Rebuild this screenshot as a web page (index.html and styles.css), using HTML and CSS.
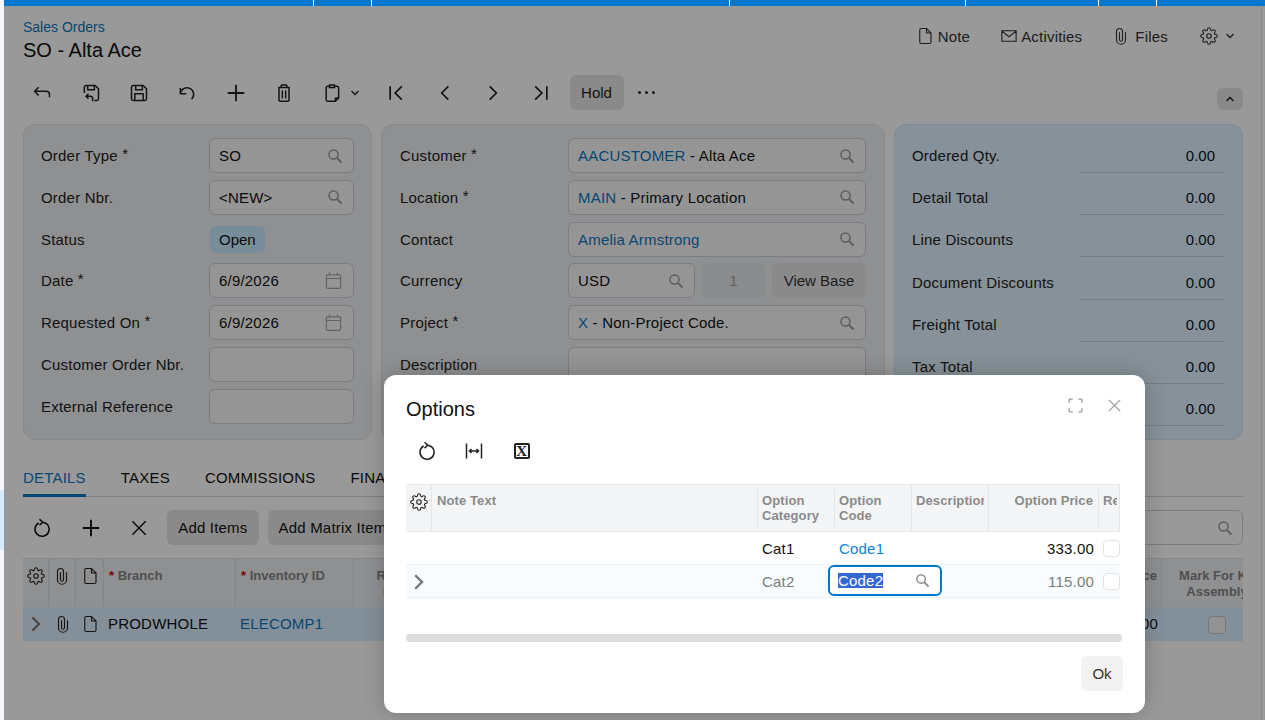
FILE: index.html
```html
<!DOCTYPE html>
<html lang="en">
<head>
<meta charset="UTF-8" />
<meta name="viewport" content="width=device-width, initial-scale=1" />
<title>Sales Orders - SO - Alta Ace</title>
<link rel="stylesheet" href="styles.css">
</head>
<body>

<svg class="icon-defs" aria-hidden="true">
  <symbol id="i-search" viewBox="0 0 16 16"><circle cx="6.5" cy="6.5" r="4.5"/><path d="M10 10l4.5 4.5" stroke-width="2"/></symbol>
  <symbol id="i-calendar" viewBox="0 0 24 24"><path d="M3 6a1 1 0 0 1 1-1h16a1 1 0 0 1 1 1v14a2 2 0 0 1-2 2H5a2 2 0 0 1-2-2z M3 9.5h18 M7 2v3 M17 2v3"/></symbol>
  <symbol id="i-back" viewBox="0 0 24 24"><path d="M8 5l-5 5 5 5 M3 10h14a4 4 0 0 1 4 4v3"/></symbol>
  <symbol id="i-saveback" viewBox="0 0 24 24"><path d="M4 12V5a2 2 0 0 1 2-2h11l4 4v12a2 2 0 0 1-2 2h-3 M8 3v5h8V3 M9 13l-3 3 3 3 M6 16h5a3 3 0 0 1 3 3v3"/></symbol>
  <symbol id="i-save" viewBox="0 0 24 24"><path d="M5 3h12l4 4v12a2 2 0 0 1-2 2H5a2 2 0 0 1-2-2V5a2 2 0 0 1 2-2z M8 3v5h8V3 M7 21v-8h10v8"/></symbol>
  <symbol id="i-undo" viewBox="0 0 24 24"><path d="M4 6v7h7 M4 13a8 8 0 1 1 13.5 6.5"/></symbol>
  <symbol id="i-plus" viewBox="0 0 24 24"><path d="M12 3v18 M3 12h18" stroke-width="2"/></symbol>
  <symbol id="i-trash" viewBox="0 0 24 24"><path d="M8.500 5V3.500a1 1 0 0 1 1-1h5a1 1 0 0 1 1 1V5 M5 5.500h14 M6 5.500v15a1.500 1.500 0 0 0 1.500 1.500h9a1.500 1.500 0 0 0 1.500-1.500v-15 M10 9v9.500 M14 9v9.500"/></symbol>
  <symbol id="i-paste" viewBox="0 0 24 24"><path d="M9 4H7a2 2 0 0 0-2 2v14a2 2 0 0 0 2 2h9l4-4V6a2 2 0 0 0-2-2h-2 M9 2.500h6v3H9z M16 22v-3a1 1 0 0 1 1-1h3"/></symbol>
  <symbol id="i-down" viewBox="0 0 24 24"><path d="M5 8l7 7 7-7" stroke-width="2.600"/></symbol>
  <symbol id="i-up" viewBox="0 0 24 24"><path d="M5 16l7-7 7 7" stroke-width="3"/></symbol>
  <symbol id="i-first" viewBox="0 0 24 24"><path d="M5 4v16 M19 4l-8 8 8 8" stroke-width="2"/></symbol>
  <symbol id="i-prev" viewBox="0 0 24 24"><path d="M16 4l-8 8 8 8" stroke-width="2"/></symbol>
  <symbol id="i-next" viewBox="0 0 24 24"><path d="M8 4l8 8-8 8" stroke-width="2"/></symbol>
  <symbol id="i-chev" viewBox="0 0 24 24"><path d="M7 3l9 9-9 9" stroke-width="3.200"/></symbol>
  <symbol id="i-last" viewBox="0 0 24 24"><path d="M19 4v16 M5 4l8 8-8 8" stroke-width="2"/></symbol>
  <symbol id="i-note" viewBox="0 0 24 24"><path d="M5 4a2 2 0 0 1 2-2h7l6 6v12a2 2 0 0 1-2 2H7a2 2 0 0 1-2-2z M14 2v6h6"/></symbol>
  <symbol id="i-mail" viewBox="0 0 24 24"><path d="M2.500 5h19v14h-19z M2.500 5.500L12 13l9.500-7.500"/></symbol>
  <symbol id="i-clip" viewBox="0 0 24 24"><path d="M10 7v10a2 2 0 0 0 4 0V6a4 4 0 0 0-8 0v11a6 6 0 0 0 12 0V7"/></symbol>
  <symbol id="i-gear" viewBox="0 0 24 24"><circle cx="12" cy="12" r="3"/><path d="M19.400 15a1.650 1.650 0 0 0 .33 1.820l.06.06a2 2 0 0 1 0 2.830 2 2 0 0 1-2.830 0l-.06-.06a1.650 1.650 0 0 0-1.820-.33 1.650 1.650 0 0 0-1 1.510V21a2 2 0 0 1-2 2 2 2 0 0 1-2-2v-.09A1.650 1.650 0 0 0 9 19.400a1.650 1.650 0 0 0-1.820.33l-.06.06a2 2 0 0 1-2.830 0 2 2 0 0 1 0-2.830l.06-.06a1.650 1.650 0 0 0 .33-1.820 1.650 1.650 0 0 0-1.510-1H3a2 2 0 0 1-2-2 2 2 0 0 1 2-2h.09A1.650 1.650 0 0 0 4.600 9a1.650 1.650 0 0 0-.33-1.820l-.06-.06a2 2 0 0 1 0-2.830 2 2 0 0 1 2.830 0l.06.06a1.650 1.650 0 0 0 1.820.33H9a1.650 1.650 0 0 0 1-1.510V3a2 2 0 0 1 2-2 2 2 0 0 1 2 2v.09a1.650 1.650 0 0 0 1 1.510 1.650 1.650 0 0 0 1.820-.33l.06-.06a2 2 0 0 1 2.830 0 2 2 0 0 1 0 2.830l-.06.06a1.650 1.650 0 0 0-.33 1.820V9a1.650 1.650 0 0 0 1.510 1H21a2 2 0 0 1 2 2 2 2 0 0 1-2 2h-.09a1.650 1.650 0 0 0-1.510 1z"/></symbol>
  <symbol id="i-reload" viewBox="0 0 24 24"><path d="M9 1.500l4 3.500-4 3.500 M13 5a8.500 8.500 0 1 1-5 1"/></symbol>
  <symbol id="i-close" viewBox="0 0 24 24"><path d="M4 4l16 16 M20 4L4 20"/></symbol>
  <symbol id="i-expand" viewBox="0 0 24 24"><path d="M3 8V4a1 1 0 0 1 1-1h4 M16 3h4a1 1 0 0 1 1 1v4 M21 16v4a1 1 0 0 1-1 1h-4 M8 21H4a1 1 0 0 1-1-1v-4"/></symbol>
  <symbol id="i-fit" viewBox="0 0 24 24"><path d="M3 3v18 M21 3v18 M6.500 12h11 M9 9.500L6.500 12 9 14.500 M15 9.500l2.500 2.500-2.500 2.500"/></symbol>
</svg>

<div class="app">
  <div class="left-strip"><div class="left-strip-mark"></div></div>

  <div class="app-col">
    <!-- top bar -->
    <div class="topbar">
      <span style="width:310px"></span>
      <span style="width:58px"></span>
      <span style="width:358px"></span>
      <span style="width:236px"></span>
      <span style="width:133px"></span>
      <span style="width:58px"></span>
    </div>

    <div class="page">
      <div class="page-body">

        <!-- title -->
        <div class="page-head">
          <div>
            <div class="crumb">Sales Orders</div>
            <div class="page-title">SO - Alta Ace</div>
          </div>
          <div class="head-links">
            <span class="head-link"><svg class="ico ico-18"><use href="#i-note"/></svg>Note</span>
            <span class="head-link head-link-tight"><svg class="ico ico-18"><use href="#i-mail"/></svg>Activities</span>
            <span class="head-link head-link-files"><svg class="ico ico-18"><use href="#i-clip"/></svg>Files</span>
            <span class="head-link head-link-gear"><svg class="ico ico-18"><use href="#i-gear"/></svg><svg class="ico ico-12"><use href="#i-down"/></svg></span>
          </div>
        </div>

        <!-- main toolbar -->
        <div class="toolbar">
          <button class="tool"><svg class="ico"><use href="#i-back"/></svg></button>
          <button class="tool"><svg class="ico"><use href="#i-saveback"/></svg></button>
          <button class="tool"><svg class="ico"><use href="#i-save"/></svg></button>
          <button class="tool"><svg class="ico"><use href="#i-undo"/></svg></button>
          <button class="tool"><svg class="ico ico-plus"><use href="#i-plus"/></svg></button>
          <button class="tool"><svg class="ico"><use href="#i-trash"/></svg></button>
          <button class="tool tool-menu"><svg class="ico"><use href="#i-paste"/></svg><svg class="ico ico-12"><use href="#i-down"/></svg></button>
          <button class="tool"><svg class="ico"><use href="#i-first"/></svg></button>
          <button class="tool"><svg class="ico"><use href="#i-prev"/></svg></button>
          <button class="tool"><svg class="ico"><use href="#i-next"/></svg></button>
          <button class="tool"><svg class="ico"><use href="#i-last"/></svg></button>
          <button class="btn btn-hold">Hold</button>
          <button class="tool tool-dots"><span></span><span></span><span></span></button>
          <button class="collapse-btn"><svg class="ico ico-12"><use href="#i-up"/></svg></button>
        </div>

        <!-- summary cards -->
        <div class="cards">
          <div class="card">
            <div class="field-row"><div class="field-label">Order Type <span class="req">*</span></div><div class="field"><span class="field-text">SO</span><svg class="ico-search"><use href="#i-search"/></svg></div></div>
            <div class="field-row"><div class="field-label">Order Nbr.</div><div class="field"><span class="field-text">&lt;NEW&gt;</span><svg class="ico-search"><use href="#i-search"/></svg></div></div>
            <div class="field-row"><div class="field-label">Status</div><div><span class="pill">Open</span></div></div>
            <div class="field-row"><div class="field-label">Date <span class="req">*</span></div><div class="field"><span class="field-text">6/9/2026</span><svg class="ico-cal"><use href="#i-calendar"/></svg></div></div>
            <div class="field-row"><div class="field-label">Requested On <span class="req">*</span></div><div class="field"><span class="field-text">6/9/2026</span><svg class="ico-cal"><use href="#i-calendar"/></svg></div></div>
            <div class="field-row"><div class="field-label">Customer Order Nbr.</div><div class="field"></div></div>
            <div class="field-row"><div class="field-label">External Reference</div><div class="field"></div></div>
          </div>

          <div class="card card-wide">
            <div class="field-row"><div class="field-label">Customer <span class="req">*</span></div><div class="field"><span class="field-text"><span class="link">AACUSTOMER</span> - Alta Ace</span><svg class="ico-search"><use href="#i-search"/></svg></div></div>
            <div class="field-row"><div class="field-label">Location <span class="req">*</span></div><div class="field"><span class="field-text"><span class="link">MAIN</span> - Primary Location</span><svg class="ico-search"><use href="#i-search"/></svg></div></div>
            <div class="field-row"><div class="field-label">Contact</div><div class="field"><span class="field-text link">Amelia Armstrong</span><svg class="ico-search"><use href="#i-search"/></svg></div></div>
            <div class="field-row">
              <div class="field-label">Currency</div>
              <div class="field-group">
                <div class="field field-currency"><span class="field-text">USD</span><svg class="ico-search"><use href="#i-search"/></svg></div>
                <div class="field-disabled">1</div>
                <button class="btn btn-base">View Base</button>
              </div>
            </div>
            <div class="field-row"><div class="field-label">Project <span class="req">*</span></div><div class="field"><span class="field-text"><span class="link">X</span> - Non-Project Code.</span><svg class="ico-search"><use href="#i-search"/></svg></div></div>
            <div class="field-row"><div class="field-label">Description</div><div class="field"></div></div>
          </div>

          <div class="card card-totals">
            <div class="field-row"><div class="field-label">Ordered Qty.</div><div class="total-value">0.00</div></div>
            <div class="field-row"><div class="field-label">Detail Total</div><div class="total-value">0.00</div></div>
            <div class="field-row"><div class="field-label">Line Discounts</div><div class="total-value">0.00</div></div>
            <div class="field-row"><div class="field-label">Document Discounts</div><div class="total-value">0.00</div></div>
            <div class="field-row"><div class="field-label">Freight Total</div><div class="total-value">0.00</div></div>
            <div class="field-row"><div class="field-label">Tax Total</div><div class="total-value">0.00</div></div>
            <div class="field-row"><div class="field-label">Order Total</div><div class="total-value">0.00</div></div>
          </div>
        </div>

        <!-- tabs -->
        <div class="tabs">
          <div class="tab tab-active">DETAILS</div>
          <div class="tab">TAXES</div>
          <div class="tab">COMMISSIONS</div>
          <div class="tab">FINANCIAL</div>
        </div>

        <div class="grid-tools">
          <button class="tool"><svg class="ico"><use href="#i-reload"/></svg></button>
          <button class="tool"><svg class="ico ico-plus"><use href="#i-plus"/></svg></button>
          <button class="tool"><svg class="ico"><use href="#i-close"/></svg></button>
          <button class="btn btn-add btn-add-first">Add Items</button>
          <button class="btn btn-add">Add Matrix Items</button>
          <div class="grid-search"><svg class="ico-search"><use href="#i-search"/></svg></div>
        </div>

        <!-- details grid -->
        <div class="details">
          <div class="details-row details-head">
            <div class="dcell dcell-ico"><svg class="ico ico-18"><use href="#i-gear"/></svg></div>
            <div class="dcell dcell-ico"><svg class="ico ico-18"><use href="#i-clip"/></svg></div>
            <div class="dcell dcell-ico"><svg class="ico ico-18"><use href="#i-note"/></svg></div>
            <div class="dcell"><span class="req-red">*</span> Branch</div>
            <div class="dcell"><span class="req-red">*</span> Inventory ID</div>
            <div class="dcell dcell-center">Related<br>Items</div>
            <div class="dcell dcell-right">Unit Price</div>
            <div class="dcell dcell-center">Mark For Kit<br>Assembly</div>
          </div>
          <div class="details-row details-line">
            <div class="dcell dcell-ico dcell-chev"><svg class="ico ico-18"><use href="#i-chev"/></svg></div>
            <div class="dcell dcell-ico"><svg class="ico ico-18"><use href="#i-clip"/></svg></div>
            <div class="dcell dcell-ico"><svg class="ico ico-18"><use href="#i-note"/></svg></div>
            <div class="dcell">PRODWHOLE</div>
            <div class="dcell link">ELECOMP1</div>
            <div class="dcell"></div>
            <div class="dcell dcell-right">0.00</div>
            <div class="dcell dcell-center"><span class="check"></span></div>
          </div>
        </div>

      </div>

      <!-- dialog -->
      <div class="backdrop"></div>
      <div class="modal">
        <div class="modal-head">
          <div class="modal-title">Options</div>
          <div class="modal-actions">
            <svg class="ico-modal"><use href="#i-expand"/></svg>
            <svg class="ico-modal"><use href="#i-close"/></svg>
          </div>
        </div>

        <div class="modal-tools">
          <button class="modal-tool"><svg class="ico"><use href="#i-reload"/></svg></button>
          <button class="modal-tool"><svg class="ico"><use href="#i-fit"/></svg></button>
          <button class="modal-tool"><span class="excel-x">X</span></button>
        </div>

        <div class="opt-grid">
          <div class="opt-row opt-head">
            <div class="ocell ocell-gear"><svg class="ico ico-18"><use href="#i-gear"/></svg></div>
            <div class="ocell ocell-note"><span class="ocell-clip">Note Text</span></div>
            <div class="ocell"><span class="ocell-clip">Option Category</span></div>
            <div class="ocell"><span class="ocell-clip">Option Code</span></div>
            <div class="ocell"><span class="ocell-clip ocell-nowrap">Description</span></div>
            <div class="ocell ocell-right"><span class="ocell-clip">Option Price</span></div>
            <div class="ocell ocell-last"><span class="ocell-clip ocell-nowrap">Required</span></div>
          </div>
          <div class="opt-row opt-line">
            <div class="ocell"></div>
            <div class="ocell"></div>
            <div class="ocell">Cat1</div>
            <div class="ocell opt-link">Code1</div>
            <div class="ocell"></div>
            <div class="ocell ocell-right">333.00</div>
            <div class="ocell ocell-check"><span class="opt-check"></span></div>
          </div>
          <div class="opt-row opt-line opt-line-active">
            <div class="ocell ocell-gear"><svg class="ico ico-18"><use href="#i-chev"/></svg></div>
            <div class="ocell"></div>
            <div class="ocell">Cat2</div>
            <div class="ocell ocell-edit">
              <div class="cell-editor"><span class="cell-selected">Code2</span><svg class="ico-search"><use href="#i-search"/></svg></div>
            </div>
            <div class="ocell"></div>
            <div class="ocell ocell-right">115.00</div>
            <div class="ocell ocell-check"><span class="opt-check"></span></div>
          </div>
        </div>

        <div class="opt-scroll"></div>

        <div class="modal-foot">
          <button class="btn-ok">Ok</button>
        </div>
      </div>
    </div>
  </div>
</div>

</body>
</html>
```

FILE: styles.css
```css
* { box-sizing: border-box; }
html, body {
  margin: 0;
  height: 100%;
  overflow: hidden;
}
body {
  font-family: "Liberation Sans", Arial, sans-serif;
  font-size: 15px;
  color: #111;
  background: #fff;
}
button {
  font: inherit;
  color: inherit;
  border: none;
  background: none;
  padding: 0;
}
.icon-defs {
  position: absolute;
  width: 0;
  height: 0;
}

/* icons */
.ico {
  width: 20px;
  height: 20px;
  fill: none;
  stroke: currentColor;
  stroke-width: 1.8;
  flex: none;
}
.ico-18 { width: 18px; height: 18px; stroke-width: 1.5; }
.ico-12 { width: 12px; height: 12px; }
.ico-plus { width: 22px; height: 22px; }
.ico-search {
  width: 16px;
  height: 16px;
  margin-left: auto;
  fill: none;
  stroke: #9c9c9c;
  stroke-width: 1.5;
  flex: none;
}
.ico-cal {
  width: 19px;
  height: 19px;
  margin-left: auto;
  fill: none;
  stroke: #a6a6a6;
  stroke-width: 1.5;
  flex: none;
}

/* shell */
.app {
  display: flex;
  width: 1265px;
  height: 720px;
}
.left-strip {
  width: 4px;
  flex: none;
  padding-top: 490px;
  background: #f6f8fb;
}
.left-strip-mark {
  height: 60px;
  background: #d6eaf8;
}
.app-col {
  flex: 1;
  display: flex;
  flex-direction: column;
  min-width: 0;
}
.topbar {
  height: 6px;
  flex: none;
  display: flex;
  background: #0078d0;
}
.topbar span {
  height: 6px;
  border-right: 1px solid #fff;
}
.page {
  flex: 1;
  position: relative;
  overflow: hidden;
  background: #fff;
}
.page-body {
  width: 1258px;
  height: 100%;
  padding: 0 18px 0 19px;
  border-right: 1px solid #e2e2e2;
  overflow: hidden;
}
.backdrop {
  position: absolute;
  inset: 0;
  background: rgba(0, 0, 0, 0.4);
}

/* head */
.page-head {
  height: 69px;
  padding-top: 13px;
  display: flex;
  justify-content: space-between;
}
.crumb {
  font-size: 14px;
  line-height: 16px;
  color: #0a78c2;
}
.page-title {
  font-size: 20px;
  line-height: 26px;
  margin-top: 2px;
}
.head-links {
  display: flex;
  align-items: center;
  height: 34px;
  color: #333;
  letter-spacing: 0.2px;
}
.head-link {
  display: flex;
  align-items: center;
  gap: 4px;
  margin-left: 30px;
}
.head-link-tight { gap: 3px; }
.head-link-files { gap: 5px; }
.head-link-gear { gap: 6px; margin-left: 32px; margin-right: 7px; }

/* main toolbar */
.toolbar {
  height: 35px;
  display: flex;
  align-items: center;
  margin-left: -5px;
  position: relative;
  color: #222;
}
.tool {
  width: 48.4px;
  height: 35px;
  display: flex;
  align-items: center;
  justify-content: center;
  flex: none;
}
.tool-menu { width: 63.6px; gap: 7px; justify-content: flex-start; padding-left: 14px; }
.btn {
  height: 35px;
  border-radius: 6px;
  background: #e6e6e6;
  flex: none;
}
.btn-hold { width: 54px; margin-left: 4px; }
.tool-dots { gap: 4px; width: 46px; }
.tool-dots span {
  width: 3px;
  height: 3px;
  border-radius: 50%;
  background: #222;
}
.collapse-btn {
  position: absolute;
  right: 0;
  top: 13px;
  width: 26px;
  height: 22px;
  border-radius: 6px;
  background: #e6e6e6;
  display: flex;
  align-items: center;
  justify-content: center;
}

/* cards */
.cards {
  display: grid;
  grid-template-columns: 349px 504px 349px;
  gap: 9px;
  margin-top: 14px;
}
.card {
  height: 316px;
  padding: 13px 17px;
  border: 1px solid #e3e5e8;
  border-radius: 12px;
  background: #edf0f3;
  display: flex;
  flex-direction: column;
  gap: 6.8px;
}
.card-wide { padding-left: 18px; }
.card-totals {
  background: #dff2ff;
  border-color: #d2e8f8;
  gap: 7.2px;
}
.field-row {
  display: grid;
  grid-template-columns: 168px 145px;
  height: 35px;
  align-items: center;
  flex: none;
}
.card-wide .field-row { grid-template-columns: 168px 298px; }
.card-totals .field-row { grid-template-columns: 168px 144px; }
.field-label {
  color: #222;
  letter-spacing: 0.2px;
}
.req {
  font-size: 15px;
  line-height: 0;
  vertical-align: 2px;
}
.field {
  height: 35px;
  display: flex;
  align-items: center;
  padding: 0 10px 0 9px;
  border: 1px solid #cdd0d5;
  border-radius: 6px;
  background: #f9f9f9;
}
.field-text {
  letter-spacing: 0.2px;
  white-space: nowrap;
}
.link { color: #0a78c2; }
.pill {
  display: inline-block;
  margin-left: 1px;
  padding: 0 9px;
  line-height: 27px;
  border-radius: 6px;
  background: #c6ecff;
}
.field-group {
  display: flex;
  gap: 7px;
}
.field-currency { width: 127px; }
.field-disabled {
  width: 63px;
  height: 35px;
  line-height: 35px;
  text-align: center;
  border-radius: 6px;
  background: #e6e8ea;
  color: #a2a2a2;
}
.btn-base { width: 94px; color: #333; }
.total-value {
  height: 35px;
  line-height: 36px;
  padding-right: 9px;
  text-align: right;
  border-bottom: 1px solid #c6d4dd;
}

/* tabs */
.tabs {
  display: flex;
  gap: 35px;
  height: 38px;
  margin-top: 19px;
  border-bottom: 1px solid #d8d8d8;
  letter-spacing: 0.2px;
}
.tab { line-height: 38px; }
.tab-active {
  color: #0a78c2;
  height: 38px;
  border-bottom: 3px solid #0a78c2;
}

.grid-tools {
  display: flex;
  align-items: center;
  height: 35px;
  margin-top: 13px;
  margin-left: -5px;
}
.btn-add { margin-right: 9px; padding: 0 11px; letter-spacing: 0.2px; }
.btn-add-first { margin-left: 4px; }
.grid-search {
  margin-left: auto;
  width: 300px;
  height: 35px;
  display: flex;
  align-items: center;
  padding-right: 9px;
  border: 1px solid #cdd0d5;
  border-radius: 6px;
}

/* details grid */
.details {
  margin-top: 13px;
  overflow: hidden;
}
.details-row {
  display: grid;
  grid-template-columns: 26px 27px 28px 132px 118px 92px 716px 110px;
}
.details-head {
  height: 49px;
  background: #eef0f3;
  border-top: 1px solid #e0e2e5;
  font-size: 13px;
  font-weight: bold;
}
.details-head .dcell {
  padding: 9px 4px 0 5px;
  border-right: 1px solid #dcdee2;
  line-height: 16px;
  color: #858585;
}
.details-head .dcell-ico { padding: 8px 0 0 0; color: #222; text-align: center; }
.details-head .req-red { color: #c00; }
.details-line {
  height: 34px;
  align-items: center;
  background: #dcf0ff;
  line-height: 32px;
}
.dcell { white-space: nowrap; overflow: hidden; }
.details-line .dcell { padding: 0 4px; letter-spacing: 0.2px; }
.dcell-ico { display: flex; justify-content: center; }
.details-line .dcell-ico { padding: 0; color: #222; }
.details-line .dcell-chev { color: #777; }
.dcell-center { text-align: center; }
.dcell-right { text-align: right; }
.details-head .dcell-right, .details-line .dcell-right { padding-right: 4px; }
.check {
  display: inline-block;
  width: 18px;
  height: 18px;
  vertical-align: middle;
  border: 1px solid #c4c8cc;
  border-radius: 4px;
  background: #f6f6f6;
}

/* dialog */
.modal {
  position: absolute;
  left: 380px;
  top: 369px;
  width: 761px;
  height: 338px;
  padding: 22px;
  background: #fff;
  border-radius: 12px;
  box-shadow: 0 0 22px rgba(0, 0, 0, 0.22);
}
.modal-head {
  display: flex;
  align-items: center;
  justify-content: space-between;
  height: 24px;
}
.modal-title { font-size: 20px; }
.modal-actions {
  display: flex;
  gap: 22px;
  margin-top: -8px;
}
.ico-modal {
  width: 17px;
  height: 17px;
  fill: none;
  stroke: #9a9a9a;
  stroke-width: 1.8;
}
.modal-tools {
  display: flex;
  height: 34px;
  margin-top: 13px;
  margin-left: -3px;
}
.modal-tool {
  width: 47.5px;
  height: 34px;
  display: flex;
  align-items: center;
  justify-content: center;
  color: #222;
}
.excel-x {
  width: 16px;
  height: 16px;
  border: 2px solid #222;
  border-radius: 2px;
  font-family: "Liberation Serif", serif;
  font-weight: bold;
  font-size: 15px;
  line-height: 13px;
  text-align: center;
}
.opt-grid {
  width: 714px;
  margin-top: 16px;
  overflow: hidden;
}
.opt-row {
  display: grid;
  grid-template-columns: 26px 326px 77px 77px 77px 110px 21px;
}
.opt-head {
  height: 48px;
  background: #f4f5f7;
  border-top: 1px solid #e6e7e9;
  border-bottom: 1px solid #e6e7e9;
  font-size: 13px;
  font-weight: bold;
  color: #8a8a8a;
}
.ocell { min-width: 0; }
.opt-head .ocell {
  padding: 8px 4px 0;
  line-height: 15px;
  border-right: 1px solid #e6e7e9;
}
.opt-head .ocell-note { padding-left: 5px; }
.opt-head .ocell-gear { padding: 8px 0 0 4px; color: #222; }
.ocell-clip { display: block; overflow: hidden; letter-spacing: 0.1px; }
.ocell-nowrap { white-space: nowrap; }
.opt-head .ocell-last { padding-right: 2px; }
.ocell-right { text-align: right; }
.opt-head .ocell-right { padding-right: 5px; }
.opt-line {
  height: 33px;
  align-items: center;
  color: #111;
  letter-spacing: 0.2px;
  border-bottom: 1px solid #e8f1f6;
}
.opt-line .ocell { padding: 0 4px; }
.opt-line .ocell-right { padding-right: 5px; }
.opt-line .ocell-gear { padding: 4px 0 0 4px; color: #777; }
.opt-line-active {
  background: #f8fcfe;
  color: #7c7c7c;
}
.opt-link { color: #0a84d6; }
.ocell-check { display: flex; align-items: center; }
.opt-line .ocell-check { padding: 0 0 0 4px; }
.opt-check {
  width: 17px;
  height: 17px;
  border: 1px solid #e2e2e2;
  border-radius: 4px;
  background: #fff;
  flex: none;
}
.ocell-edit { position: relative; height: 32px; }
.cell-editor {
  position: absolute;
  left: -7px;
  top: 0;
  width: 114px;
  height: 31px;
  display: flex;
  align-items: center;
  padding: 0 10px 0 8px;
  border: 2px solid #0078c8;
  border-radius: 6px;
  background: #fff;
  color: #fff;
}
.cell-selected {
  background: #3367d1;
  line-height: 15px;
}
.cell-editor .ico-search { width: 15px; height: 15px; stroke: #888; }
.opt-scroll {
  width: 716px;
  height: 8px;
  margin-top: 36px;
  border-radius: 4px;
  background: #dcdcdc;
}
.modal-foot {
  display: flex;
  justify-content: flex-end;
  width: 717px;
  margin-top: 14px;
}
.btn-ok {
  width: 42px;
  height: 35px;
  border-radius: 6px;
  background: #f2f2f2;
  color: #333;
}
```
